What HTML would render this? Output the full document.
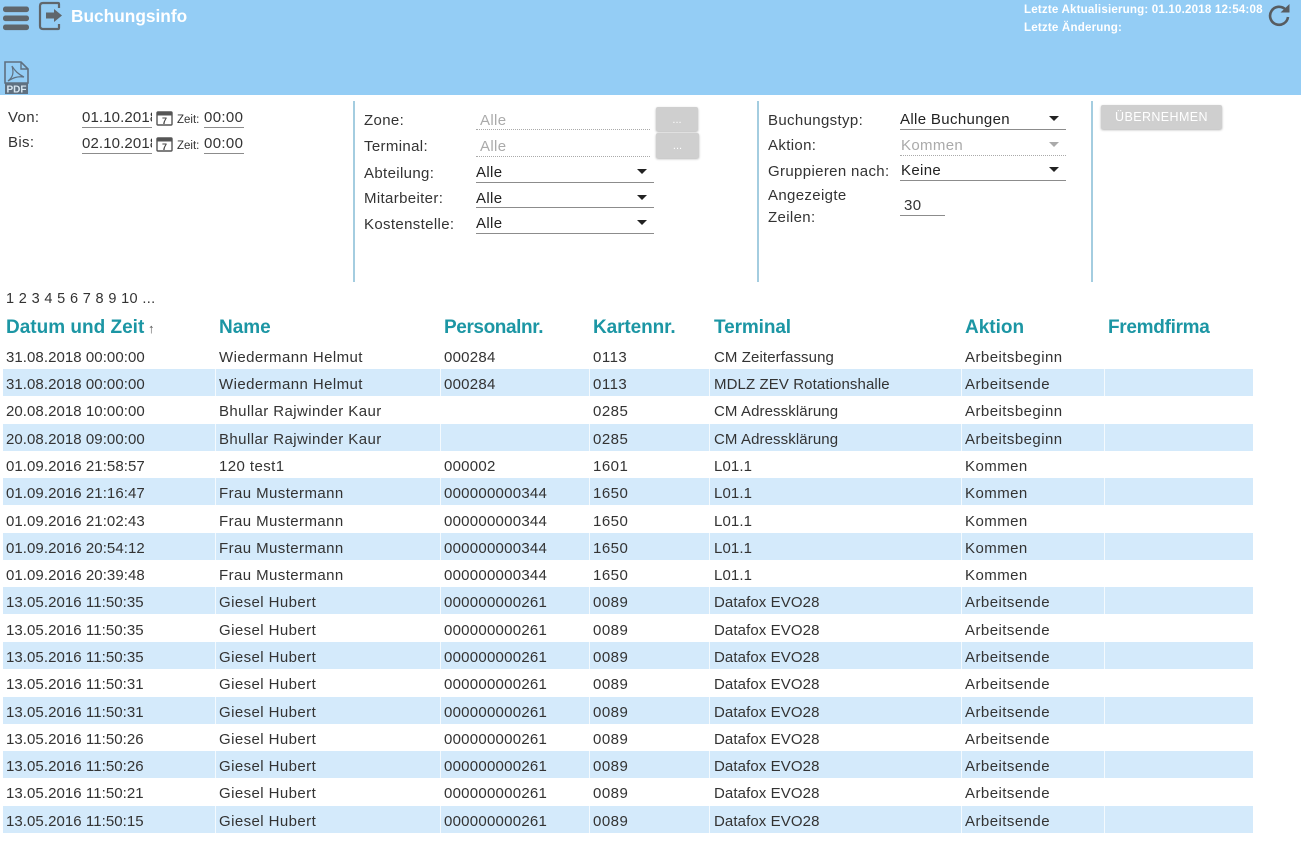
<!DOCTYPE html>
<html lang="de"><head><meta charset="utf-8"><title>Buchungsinfo</title>
<style>
html,body{margin:0;padding:0;background:#fff}
body{width:1301px;height:841px;overflow:hidden;position:relative;font-family:"Liberation Sans",sans-serif;font-size:15px;color:#333}
.a{position:absolute;white-space:nowrap}
.hd{position:absolute;left:0;top:0;width:1301px;height:95px;background:#94cdf5}
.l{position:absolute;white-space:nowrap;line-height:20px;color:#333;margin-top:1px;letter-spacing:.35px}
.v{position:absolute;white-space:nowrap;line-height:20px;color:#222;overflow:hidden;margin-top:1px;letter-spacing:.35px}
.u{position:absolute;height:1px;background:#8c8c8c}
.d{position:absolute;height:0;border-top:1px dotted #aaa}
.sep{position:absolute;top:101px;width:2px;height:181px;background:#a4cde0}
.tri{position:absolute;width:0;height:0;border-left:5px solid transparent;border-right:5px solid transparent;border-top:5px solid #222}
.btn{position:absolute;background:#cfcfcf;border-radius:2px;box-shadow:0 1px 2px rgba(0,0,0,.3);color:#fff;text-align:center}
.th{position:absolute;top:317px;line-height:22px;font-size:19px;font-weight:bold;color:#1c96a4;white-space:nowrap}
.r{position:absolute;left:3px;width:1250px;height:27px;line-height:32px;color:#333}
.r span{position:absolute;top:0;height:27px;white-space:nowrap}
.r span:nth-child(1){left:3px;letter-spacing:.06px}
.r span:nth-child(2){left:216px;letter-spacing:.42px}
.r span:nth-child(3){left:441px;letter-spacing:.25px}
.r span:nth-child(4){left:590px;letter-spacing:.5px}
.r span:nth-child(5){left:711px;letter-spacing:.1px}
.r span:nth-child(6){left:962px;letter-spacing:.45px}
.b{background:#d4eafb}
.b i{position:absolute;top:0;width:1px;height:27px;background:rgba(255,255,255,.75)}
</style></head><body>
<div class="hd"></div>

<svg class="a" style="left:2px;top:4px" width="28" height="28" viewBox="0 0 28 28"><g fill="#5f666c"><rect x="1" y="2.5" width="26" height="5.6" rx="2.5"/><rect x="1" y="11.5" width="26" height="5.6" rx="2.5"/><rect x="1" y="20.5" width="26" height="5.6" rx="2.5"/></g></svg>
<svg class="a" style="left:38px;top:1px" width="26" height="30" viewBox="0 0 26 30"><path d="M21 7V3Q21 2 20 2H5Q2 2 2 5V25Q2 28 5 28H20Q21 28 21 27V23" fill="none" stroke="#5f666c" stroke-width="2.2"/><path d="M8 11.5H16V8L24 14.5L16 21V17.5H8Z" fill="#5f666c"/></svg>
<div class="a" style="left:71px;top:5px;font-size:17.3px;font-weight:bold;color:#fff;line-height:22px">Buchungsinfo</div>
<svg class="a" style="left:4px;top:61px" width="25" height="33" viewBox="0 0 25 33"><path d="M1 1H17L24 8V22H1Z" fill="none" stroke="#5f7080" stroke-width="1.6"/><path d="M17 1V8H24" fill="none" stroke="#5f7080" stroke-width="1.4"/><path d="M8 5C10 12 9 16 4 20C9 17 13 15 20 16C14 13 11 10 8 5Z" fill="none" stroke="#5f7080" stroke-width="1.2"/><rect x="1" y="22" width="23" height="11" fill="#5f7080"/><text x="12.5" y="31.5" text-anchor="middle" font-family="Liberation Sans" font-size="10" font-weight="bold" fill="#d8e6f0">PDF</text></svg>
<div class="a" style="left:1024px;top:1px;font-size:11.6px;font-weight:bold;color:#fff;line-height:17px;letter-spacing:.17px">Letzte Aktualisierung: 01.10.2018 12:54:08</div>
<div class="a" style="left:1024px;top:19px;font-size:11.6px;font-weight:bold;color:#fff;line-height:17px;letter-spacing:.17px">Letzte Änderung:</div>
<svg class="a" style="left:1267px;top:3px" width="24" height="24" viewBox="0 0 24 24"><path d="M18.5 6.5A9 9 0 1 0 21 14" fill="none" stroke="#575c60" stroke-width="2.6"/><path d="M13.5 9.5H22.5V1Z" fill="#575c60"/></svg>

<!-- Von / Bis -->
<div class="l" style="left:8px;top:107px">Von:</div>
<div class="l" style="left:8px;top:132px">Bis:</div>
<div class="v" style="left:82px;top:107px;width:70px;color:#333;letter-spacing:.12px">01.10.2018</div>
<div class="u" style="left:82px;top:127px;width:70px"></div>
<div class="v" style="left:82px;top:133px;width:70px;color:#333;letter-spacing:.12px">02.10.2018</div>
<div class="u" style="left:82px;top:153px;width:70px"></div>
<svg class="a" style="left:156px;top:110px" width="17" height="16" viewBox="0 0 17 16"><rect x="1" y="2" width="15" height="13" rx="1" fill="#fff" stroke="#555" stroke-width="1.4"/><rect x="1" y="2" width="15" height="3.5" fill="#555"/><text x="8.5" y="14" text-anchor="middle" font-family="Liberation Sans" font-size="9" font-weight="bold" fill="#444">7</text></svg>
<svg class="a" style="left:156px;top:136px" width="17" height="16" viewBox="0 0 17 16"><rect x="1" y="2" width="15" height="13" rx="1" fill="#fff" stroke="#555" stroke-width="1.4"/><rect x="1" y="2" width="15" height="3.5" fill="#555"/><text x="8.5" y="14" text-anchor="middle" font-family="Liberation Sans" font-size="9" font-weight="bold" fill="#444">7</text></svg>
<div class="l" style="left:177px;top:109px;font-size:11.5px;letter-spacing:0">Zeit:</div>
<div class="l" style="left:177px;top:135px;font-size:11.5px;letter-spacing:0">Zeit:</div>
<div class="v" style="left:204px;top:107px;color:#333">00:00</div>
<div class="u" style="left:204px;top:127px;width:40px"></div>
<div class="v" style="left:204px;top:133px;color:#333">00:00</div>
<div class="u" style="left:204px;top:153px;width:40px"></div>

<div class="sep" style="left:353px"></div>
<!-- Zone column -->
<div class="l" style="left:364px;top:110px">Zone:</div>
<div class="l" style="left:364px;top:136px">Terminal:</div>
<div class="l" style="left:364px;top:163px">Abteilung:</div>
<div class="l" style="left:364px;top:188px">Mitarbeiter:</div>
<div class="l" style="left:364px;top:214px">Kostenstelle:</div>
<div class="v" style="left:480px;top:110px;color:#aaa">Alle</div>
<div class="d" style="left:476px;top:129px;width:174px"></div>
<div class="v" style="left:480px;top:136px;color:#aaa">Alle</div>
<div class="d" style="left:476px;top:156px;width:174px"></div>
<div class="btn" style="left:656px;top:107px;width:42px;height:24px;line-height:26px;font-size:11px">...</div>
<div class="btn" style="left:656px;top:133px;width:43px;height:25px;line-height:27px;font-size:11px">...</div>
<div class="v" style="left:476px;top:162px">Alle</div><div class="tri" style="left:637px;top:169px"></div><div class="u" style="left:476px;top:182px;width:178px"></div>
<div class="v" style="left:476px;top:188px">Alle</div><div class="tri" style="left:637px;top:195px"></div><div class="u" style="left:476px;top:207px;width:178px"></div>
<div class="v" style="left:476px;top:213px">Alle</div><div class="tri" style="left:637px;top:220px"></div><div class="u" style="left:476px;top:233px;width:178px"></div>

<div class="sep" style="left:757px"></div>
<!-- Buchungstyp column -->
<div class="l" style="left:768px;top:110px">Buchungstyp:</div>
<div class="l" style="left:768px;top:135px">Aktion:</div>
<div class="l" style="left:768px;top:161px">Gruppieren nach:</div>
<div class="l" style="left:768px;top:185px">Angezeigte</div>
<div class="l" style="left:768px;top:207px">Zeilen:</div>
<div class="v" style="left:900px;top:109px">Alle Buchungen</div><div class="tri" style="left:1049px;top:116px"></div><div class="u" style="left:900px;top:129px;width:166px"></div>
<div class="v" style="left:901px;top:135px;color:#aaa">Kommen</div><div class="tri" style="left:1049px;top:142px;border-top-color:#aaa"></div><div class="d" style="left:900px;top:155px;width:166px"></div>
<div class="v" style="left:901px;top:160px">Keine</div><div class="tri" style="left:1049px;top:167px"></div><div class="u" style="left:900px;top:180px;width:166px"></div>
<div class="v" style="left:904px;top:195px;color:#333">30</div><div class="u" style="left:900px;top:215px;width:45px"></div>

<div class="sep" style="left:1091px"></div>
<div class="btn" style="left:1101px;top:105px;width:121px;height:24px;line-height:25px;font-size:12.5px;letter-spacing:.4px">ÜBERNEHMEN</div>

<div class="a" style="left:6px;top:289px;line-height:20px;font-size:14.5px;color:#333;letter-spacing:.35px">1 2 3 4 5 6 7 8 9 10 ...</div>

<div class="th" style="left:6px">Datum und Zeit</div>
<div class="a" style="left:148px;top:322px;font-size:13px;line-height:14px;color:#555">↑</div>
<div class="th" style="left:219px">Name</div>
<div class="th" style="left:444px;letter-spacing:-.4px">Personalnr.</div>
<div class="th" style="left:593px;letter-spacing:-.1px">Kartennr.</div>
<div class="th" style="left:714px;letter-spacing:-.1px">Terminal</div>
<div class="th" style="left:965px">Aktion</div>
<div class="th" style="left:1108px;letter-spacing:-.3px">Fremdfirma</div>

<div class="r" style="top:342px"><span>31.08.2018 00:00:00</span><span>Wiedermann Helmut</span><span>000284</span><span>0113</span><span>CM Zeiterfassung</span><span>Arbeitsbeginn</span></div>
<div class="r b" style="top:369px"><span>31.08.2018 00:00:00</span><span>Wiedermann Helmut</span><span>000284</span><span>0113</span><span>MDLZ ZEV Rotationshalle</span><span>Arbeitsende</span><i style="left:212px"></i><i style="left:437px"></i><i style="left:586px"></i><i style="left:706px"></i><i style="left:958px"></i><i style="left:1101px"></i></div>
<div class="r" style="top:396px"><span>20.08.2018 10:00:00</span><span>Bhullar Rajwinder Kaur</span><span></span><span>0285</span><span>CM Adressklärung</span><span>Arbeitsbeginn</span></div>
<div class="r b" style="top:424px"><span>20.08.2018 09:00:00</span><span>Bhullar Rajwinder Kaur</span><span></span><span>0285</span><span>CM Adressklärung</span><span>Arbeitsbeginn</span><i style="left:212px"></i><i style="left:437px"></i><i style="left:586px"></i><i style="left:706px"></i><i style="left:958px"></i><i style="left:1101px"></i></div>
<div class="r" style="top:451px"><span>01.09.2016 21:58:57</span><span>120 test1</span><span>000002</span><span>1601</span><span>L01.1</span><span>Kommen</span></div>
<div class="r b" style="top:478px"><span>01.09.2016 21:16:47</span><span>Frau Mustermann</span><span>000000000344</span><span>1650</span><span>L01.1</span><span>Kommen</span><i style="left:212px"></i><i style="left:437px"></i><i style="left:586px"></i><i style="left:706px"></i><i style="left:958px"></i><i style="left:1101px"></i></div>
<div class="r" style="top:506px"><span>01.09.2016 21:02:43</span><span>Frau Mustermann</span><span>000000000344</span><span>1650</span><span>L01.1</span><span>Kommen</span></div>
<div class="r b" style="top:533px"><span>01.09.2016 20:54:12</span><span>Frau Mustermann</span><span>000000000344</span><span>1650</span><span>L01.1</span><span>Kommen</span><i style="left:212px"></i><i style="left:437px"></i><i style="left:586px"></i><i style="left:706px"></i><i style="left:958px"></i><i style="left:1101px"></i></div>
<div class="r" style="top:560px"><span>01.09.2016 20:39:48</span><span>Frau Mustermann</span><span>000000000344</span><span>1650</span><span>L01.1</span><span>Kommen</span></div>
<div class="r b" style="top:587px"><span>13.05.2016 11:50:35</span><span>Giesel Hubert</span><span>000000000261</span><span>0089</span><span>Datafox EVO28</span><span>Arbeitsende</span><i style="left:212px"></i><i style="left:437px"></i><i style="left:586px"></i><i style="left:706px"></i><i style="left:958px"></i><i style="left:1101px"></i></div>
<div class="r" style="top:615px"><span>13.05.2016 11:50:35</span><span>Giesel Hubert</span><span>000000000261</span><span>0089</span><span>Datafox EVO28</span><span>Arbeitsende</span></div>
<div class="r b" style="top:642px"><span>13.05.2016 11:50:35</span><span>Giesel Hubert</span><span>000000000261</span><span>0089</span><span>Datafox EVO28</span><span>Arbeitsende</span><i style="left:212px"></i><i style="left:437px"></i><i style="left:586px"></i><i style="left:706px"></i><i style="left:958px"></i><i style="left:1101px"></i></div>
<div class="r" style="top:669px"><span>13.05.2016 11:50:31</span><span>Giesel Hubert</span><span>000000000261</span><span>0089</span><span>Datafox EVO28</span><span>Arbeitsende</span></div>
<div class="r b" style="top:697px"><span>13.05.2016 11:50:31</span><span>Giesel Hubert</span><span>000000000261</span><span>0089</span><span>Datafox EVO28</span><span>Arbeitsende</span><i style="left:212px"></i><i style="left:437px"></i><i style="left:586px"></i><i style="left:706px"></i><i style="left:958px"></i><i style="left:1101px"></i></div>
<div class="r" style="top:724px"><span>13.05.2016 11:50:26</span><span>Giesel Hubert</span><span>000000000261</span><span>0089</span><span>Datafox EVO28</span><span>Arbeitsende</span></div>
<div class="r b" style="top:751px"><span>13.05.2016 11:50:26</span><span>Giesel Hubert</span><span>000000000261</span><span>0089</span><span>Datafox EVO28</span><span>Arbeitsende</span><i style="left:212px"></i><i style="left:437px"></i><i style="left:586px"></i><i style="left:706px"></i><i style="left:958px"></i><i style="left:1101px"></i></div>
<div class="r" style="top:778px"><span>13.05.2016 11:50:21</span><span>Giesel Hubert</span><span>000000000261</span><span>0089</span><span>Datafox EVO28</span><span>Arbeitsende</span></div>
<div class="r b" style="top:806px"><span>13.05.2016 11:50:15</span><span>Giesel Hubert</span><span>000000000261</span><span>0089</span><span>Datafox EVO28</span><span>Arbeitsende</span><i style="left:212px"></i><i style="left:437px"></i><i style="left:586px"></i><i style="left:706px"></i><i style="left:958px"></i><i style="left:1101px"></i></div>
</body></html>
